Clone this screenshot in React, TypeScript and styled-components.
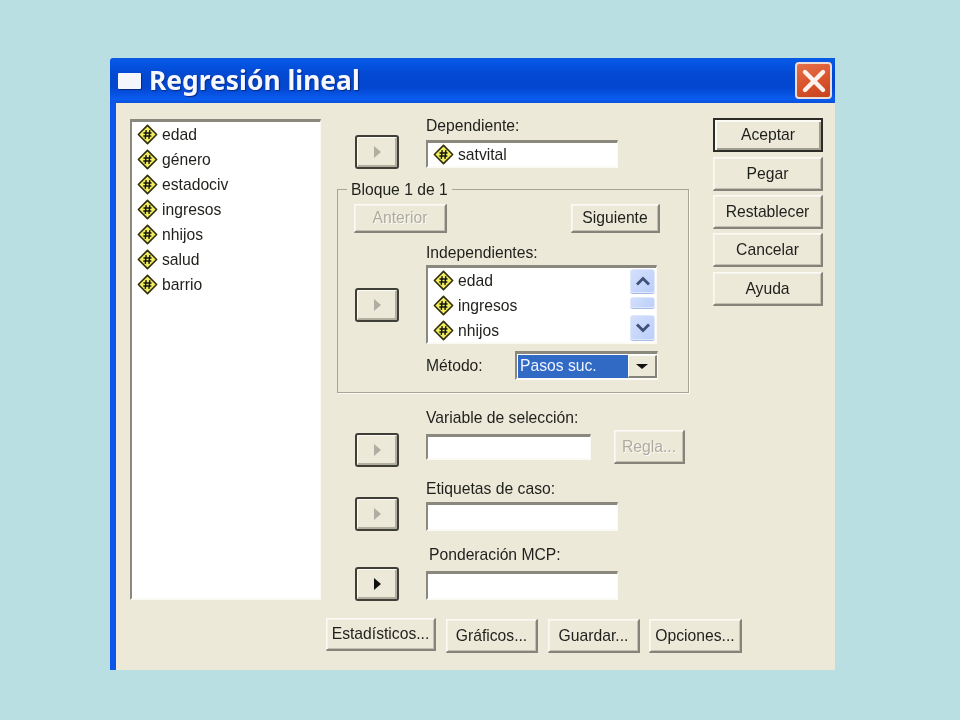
import React from "react";
import styled, { createGlobalStyle } from "styled-components";

const Global = createGlobalStyle`
  html, body { margin: 0; padding: 0; background: #b9dfe3; }
  body { width: 960px; height: 720px; overflow: hidden; }
`;
const Page = styled.div`
  width: 960px; height: 720px; box-sizing: border-box; padding: 58px 0 0 110px;
  font-family: "Liberation Sans", Arial, sans-serif; color: #1f1f1c; font-size: 15.7px;
`;
const Win = styled.div`
  width: 725px; height: 612px; display: flex; flex-direction: column; filter: blur(0.4px);
`;
const TitleBar = styled.div`
  height: 45px; flex: none; display: flex; align-items: center; box-sizing: border-box; padding: 0 3px 0 8px;
  border-radius: 3px 0 0 0;
  background: linear-gradient(180deg, #0a5be2 0%, #0456e6 8%, #0349d2 35%, #0346d0 65%, #0a5cf0 92%, #0a50d8 100%);
`;
const TitleIcon = styled.div`
  width: 23px; height: 16px; background: #f4f6fb; border-radius: 1px; box-shadow: 1px 1px 1px #0a2a7a; flex: none;
`;
const TitleText = styled.div`
  margin-left: 8px; flex: 1; font-family: "Noto Sans", sans-serif; font-weight: 700; font-size: 26.4px; color: #f6f8ff;
  text-shadow: 1px 1px 1px #0b2a80; line-height: 45px;
`;
const Close = styled.div`
  width: 37px; height: 37px; box-sizing: border-box; border: 2px solid #ecdcd6; border-radius: 4px;
  background: linear-gradient(160deg, #e4704a, #d9532b 55%, #c6421e);
  display: flex; align-items: center; justify-content: center; flex: none;
`;
const Client = styled.div`
  flex: 1; background: #ece9d9; border-left: 6px solid #0c55ea; padding: 15px 12px 0 14px; display: flex; flex-direction: column;
`;
const Main = styled.div` display: flex; align-items: flex-start; `;
const sunken = `
  border-style: solid; border-width: 3px 1px 2px 2px; border-color: #8b897d #fbfaf4 #fbfaf4 #8b897d;
`;
const SourceBox = styled.div`
  width: 191px; height: 481px; flex: none; margin-top: 1px; box-sizing: border-box; background: #fff;
  ${sunken}
  padding: 0 0 0 4px;
`;
const Item = styled.div`
  display: flex; align-items: center; height: 25px; gap: 3px; white-space: nowrap; line-height: 24px;
`;
const Middle = styled.div` width: 352px; margin-left: 16px; flex: none; `;
const Row = styled.div<{ $gap?: number }>`
  display: flex; align-items: flex-start; padding-left: 18px; margin-top: ${p => p.$gap ?? 0}px;
`;
const ArrowBtn = styled.div<{ $top: number; $on?: boolean }>`
  width: 44px; height: 34px; margin-top: ${p => p.$top}px; margin-right: 27px; flex: none; box-sizing: border-box;
  border: 2px solid #3f3e37; border-radius: 3px; background: #ece9d9;
  box-shadow: inset 1px 1px 0 #fbfaf4, inset -2px -2px 0 #b2afa0;
  display: flex; align-items: center; justify-content: center;
  &::before {
    content: ""; border-style: solid; border-width: 6px 0 6px 7px;
    border-color: transparent transparent transparent ${p => (p.$on ? "#111" : "#b0aea2")};
  }
`;
const Field = styled.div``;
const Label = styled.div<{ $h: number; $indent?: number }>`
  height: ${p => p.$h}px; padding-left: ${p => p.$indent ?? 0}px; line-height: 16px; white-space: nowrap;
`;
const TextBox = styled.div<{ $w: number; $h: number }>`
  width: ${p => p.$w}px; height: ${p => p.$h}px; box-sizing: border-box; background: #fff;
  ${sunken}
  display: flex; align-items: center; padding-left: 4px; gap: 3px; overflow: hidden;
`;
const Group = styled.div`
  position: relative; box-sizing: border-box; height: 204px; margin-top: 20px; border: 1px solid #a7a596;
  box-shadow: 1px 1px 0 #fbfaf4; padding: 14px 28px 0 16px;
`;
const Legend = styled.div`
  position: absolute; left: 9px; top: -9px; background: #ece9d9; padding: 0 4px; line-height: 17px;
`;
const Spread = styled.div` display: flex; justify-content: space-between; `;
const PushBtn = styled.div<{ $w: number; $h: number; $off?: boolean; $def?: boolean; $top?: number; $left?: number }>`
  width: ${p => p.$w}px; height: ${p => p.$h}px; margin-top: ${p => p.$top ?? 0}px; margin-left: ${p => p.$left ?? 0}px;
  flex: none; box-sizing: border-box;
  display: flex; align-items: center; justify-content: center; background: #ece9d9; white-space: nowrap;
  color: ${p => (p.$off ? "#aeaca0" : "#1f1f1c")};
  ${p => p.$off ? "text-shadow: 1px 1px 0 #fbfaf4;" : ""}
  ${p => p.$def
    ? "border: 2px solid #2c2b25; box-shadow: inset 2px 2px 0 #fbfaf4, inset -2px -2px 0 #a09d8e;"
    : "border-style: solid; border-width: 1px 2px 2px 1px; border-color: #fbfaf4 #85837a #85837a #fbfaf4; box-shadow: inset 1px 1px 0 #f6f4ea, inset -1px -1px 0 #c4c1b2;"}
`;
const IndepRow = styled.div`
  display: flex; align-items: flex-start; margin-left: 1px; margin-top: 12px;
`;
const ListBox = styled.div`
  width: 231px; height: 79px; box-sizing: border-box; background: #fff; display: flex; overflow: hidden;
  ${sunken}
`;
const ListItems = styled.div` flex: 1; padding: 0 0 0 4px; `;
const Scroll = styled.div`
  width: 27px; flex: none; display: flex; flex-direction: column; align-items: center; padding-top: 1px; box-sizing: border-box;
`;
const ScrollBtn = styled.div<{ $top?: number; $h: number }>`
  width: 25px; height: ${p => p.$h}px; margin-top: ${p => p.$top ?? 0}px; box-sizing: border-box; border: 1px solid #dfe8fb; border-radius: 3px;
  background: linear-gradient(135deg, #d3dffc, #bccffa);
  box-shadow: 0 1px 0 #a6bbe6;
  display: flex; align-items: center; justify-content: center;
`;
const MethodRow = styled.div` display: flex; align-items: center; height: 29px; margin: 7px 0 0 72px; `;
const MethodLabel = styled.div` width: 89px; flex: none; `;
const Select = styled.div`
  width: 143px; height: 29px; box-sizing: border-box; display: flex; background: #fff;
  ${sunken} padding: 1px 0 0 1px;
`;
const Selected = styled.div`
  flex: 1; background: #316ac5; color: #eef3ff; line-height: 22px; padding-left: 2px;
`;
const Drop = styled.div`
  width: 29px; flex: none; box-sizing: border-box; background: #ece9d9; display: flex; align-items: center; justify-content: center;
  border-style: solid; border-width: 1px 2px 2px 1px; border-color: #fbfaf4 #85837a #85837a #fbfaf4;
  &::before { content: ""; border-style: solid; border-width: 5px 6px 0 6px; border-color: #111 transparent transparent transparent; }
`;
const Side = styled.div` width: 110px; margin-left: 24px; flex: none; display: flex; flex-direction: column; `;
const Bottom = styled.div` display: flex; align-items: flex-start; margin: 17px 0 0 196px; `;
const Sel = styled(Field)` margin-right: 23px; `;
const IconSvg = styled.svg` flex: none; `;

const VarIcon = () => (
  <IconSvg width="23" height="23" viewBox="0 0 24 24">
    <path d="M12 0.5 L23.5 12 L12 23.5 L0.5 12 Z" fill="#fbf9d8" />
    <path d="M12 2.5 L21.5 12 L12 21.5 L2.5 12 Z" fill="#f3ee5e" stroke="#2b2a14" strokeWidth="1.6" strokeLinejoin="round" />
    <path d="M10.6 7.5 L9.7 16.5 M14.4 7.5 L13.5 16.5 M7.8 10.5 H16.2 M7.6 13.6 H16" stroke="#151510" strokeWidth="1.5" fill="none" />
  </IconSvg>
);
const Var = ({ name }: { name: string }) => (<Item><VarIcon />{name}</Item>);
const Chevron = ({ up }: { up?: boolean }) => (
  <svg width="16" height="10" viewBox="0 0 16 10">
    <path d={up ? "M2 8.5 L8 2.5 L14 8.5" : "M2 1.5 L8 7.5 L14 1.5"} fill="none" stroke="#3f517a" strokeWidth="2.8" />
  </svg>
);

export default function App() {
  return (
    <Page>
      <Global />
      <Win>
        <TitleBar>
          <TitleIcon />
          <TitleText>Regresión lineal</TitleText>
          <Close>
            <svg width="26" height="26" viewBox="0 0 26 26">
              <path d="M4 4 L22 22 M22 4 L4 22" stroke="#fdf3ee" strokeWidth="4.4" strokeLinecap="round" />
            </svg>
          </Close>
        </TitleBar>
        <Client>
          <Main>
            <SourceBox>
              {["edad", "género", "estadociv", "ingresos", "nhijos", "salud", "barrio"].map(n => <Var key={n} name={n} />)}
            </SourceBox>
            <Middle>
              <Row>
                <ArrowBtn $top={17} />
                <Field>
                  <Label $h={22}>Dependiente:</Label>
                  <TextBox $w={192} $h={28}><VarIcon />satvital</TextBox>
                </Field>
              </Row>
              <Group>
                <Legend>Bloque 1 de 1</Legend>
                <Spread>
                  <PushBtn $w={93} $h={29} $off>Anterior</PushBtn>
                  <PushBtn $w={89} $h={29}>Siguiente</PushBtn>
                </Spread>
                <IndepRow>
                  <ArrowBtn $top={43} />
                  <Field>
                    <Label $h={20}>Independientes:</Label>
                    <ListBox>
                      <ListItems>
                        <Var name="edad" />
                        <Var name="ingresos" />
                        <Var name="nhijos" />
                      </ListItems>
                      <Scroll>
                        <ScrollBtn $h={24}><Chevron up /></ScrollBtn>
                        <ScrollBtn $top={4} $h={11} />
                        <ScrollBtn $top={7} $h={25}><Chevron /></ScrollBtn>
                      </Scroll>
                    </ListBox>
                  </Field>
                </IndepRow>
                <MethodRow>
                  <MethodLabel>Método:</MethodLabel>
                  <Select><Selected>Pasos suc.</Selected><Drop /></Select>
                </MethodRow>
              </Group>
              <Row $gap={17}>
                <ArrowBtn $top={23} />
                <Sel>
                  <Label $h={24}>Variable de selección:</Label>
                  <TextBox $w={165} $h={26} />
                </Sel>
                <PushBtn $w={71} $h={34} $top={20} $off>Regla...</PushBtn>
              </Row>
              <Row $gap={14}>
                <ArrowBtn $top={16} />
                <Field>
                  <Label $h={21}>Etiquetas de caso:</Label>
                  <TextBox $w={192} $h={29} />
                </Field>
              </Row>
              <Row $gap={16}>
                <ArrowBtn $top={20} $on />
                <Field>
                  <Label $h={24} $indent={3}>Ponderación MCP:</Label>
                  <TextBox $w={192} $h={29} />
                </Field>
              </Row>
            </Middle>
            <Side>
              <PushBtn $w={110} $h={34} $def>Aceptar</PushBtn>
              <PushBtn $w={110} $h={34} $top={5}>Pegar</PushBtn>
              <PushBtn $w={110} $h={34} $top={4}>Restablecer</PushBtn>
              <PushBtn $w={110} $h={34} $top={4}>Cancelar</PushBtn>
              <PushBtn $w={110} $h={34} $top={5}>Ayuda</PushBtn>
            </Side>
          </Main>
          <Bottom>
            <PushBtn $w={110} $h={33}>Estadísticos...</PushBtn>
            <PushBtn $w={92} $h={34} $top={1} $left={10}>Gráficos...</PushBtn>
            <PushBtn $w={92} $h={34} $top={1} $left={10}>Guardar...</PushBtn>
            <PushBtn $w={93} $h={34} $top={1} $left={9}>Opciones...</PushBtn>
          </Bottom>
        </Client>
      </Win>
    </Page>
  );
}
